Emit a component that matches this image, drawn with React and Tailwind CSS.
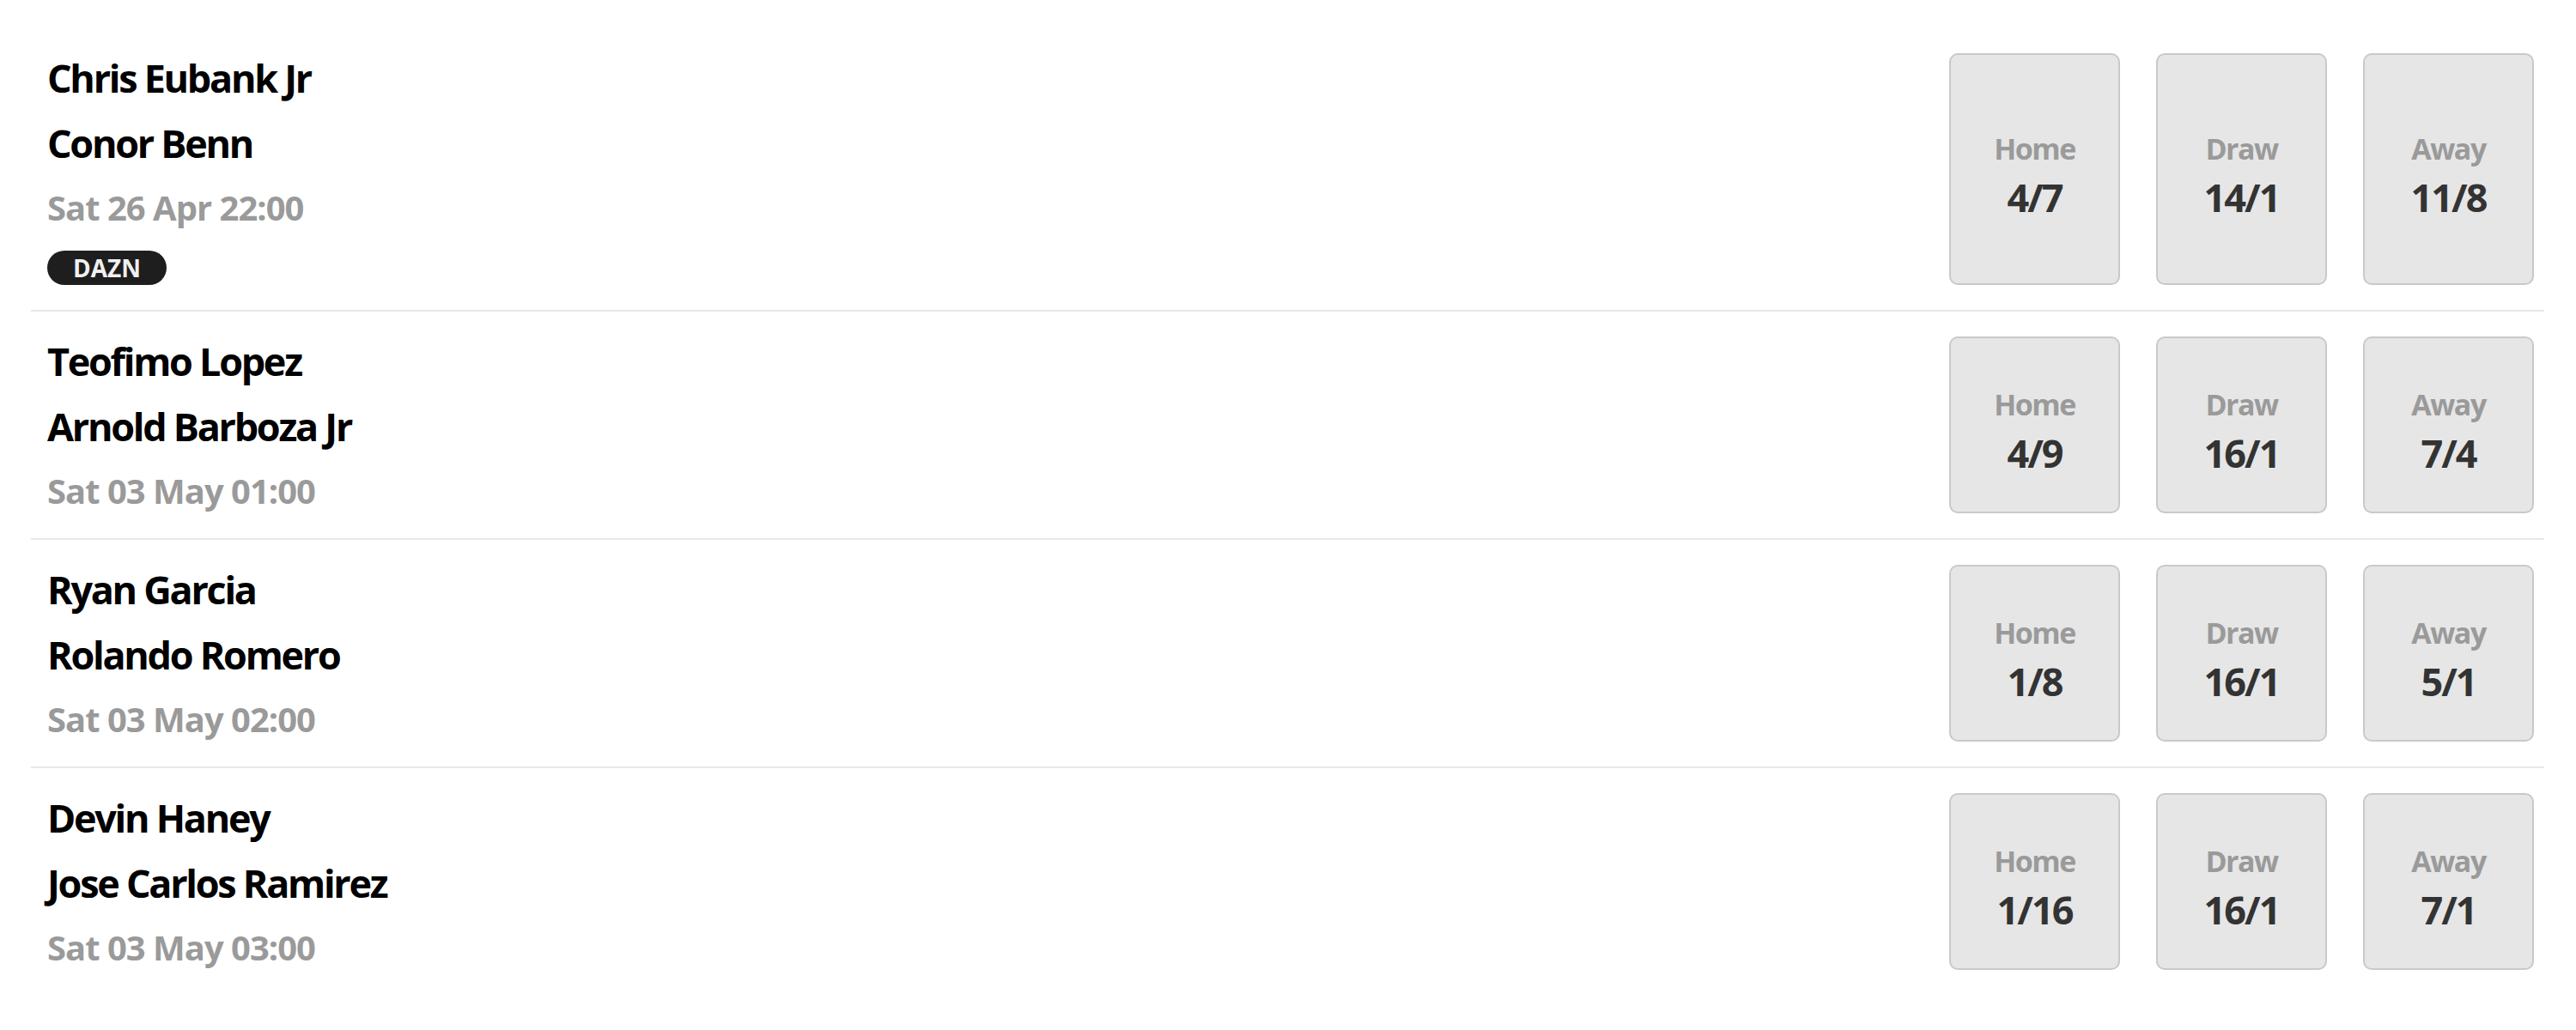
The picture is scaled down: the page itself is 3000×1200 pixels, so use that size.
import React from 'react';

const fights = [
  { home: 'Chris Eubank Jr', away: 'Conor Benn', date: 'Sat 26 Apr 22:00', tv: 'DAZN', odds: ['4/7', '14/1', '11/8'] },
  { home: 'Teofimo Lopez', away: 'Arnold Barboza Jr', date: 'Sat 03 May 01:00', odds: ['4/9', '16/1', '7/4'] },
  { home: 'Ryan Garcia', away: 'Rolando Romero', date: 'Sat 03 May 02:00', odds: ['1/8', '16/1', '5/1'] },
  { home: 'Devin Haney', away: 'Jose Carlos Ramirez', date: 'Sat 03 May 03:00', odds: ['1/16', '16/1', '7/1'] },
];

const labels = ['Home', 'Draw', 'Away'];

const OddsButton = ({ label, price }) => (
  <button className="w-[199px] flex flex-col items-center justify-center pt-[16px] bg-[#e6e6e6] border-2 border-[#c9c9c9] rounded-[10px]">
    <span className="text-[34px] leading-[40px] font-bold text-[#9a9a9a] tracking-[-1.5px]">{label}</span>
    <span className="mt-[9px] text-[45px] leading-[56px] font-bold text-[#333333] tracking-[-2px]">{price}</span>
  </button>
);

const App = () => {
  return (
    <div className="min-h-screen bg-white pt-[33px] pl-[36px] pr-[37px] font-['Open_Sans','Noto_Sans',sans-serif]">
      {fights.map((f, i) => (
        <div
          key={f.home}
          className={`flex justify-between pl-[19px] pr-[12px] py-[29px] ${i < fights.length - 1 ? 'border-b-2 border-[#e8e8e8]' : ''}`}
        >
          <div className="flex flex-col">
            <span className="text-[45px] leading-[58px] font-bold text-black tracking-[-2.3px]">{f.home}</span>
            <span className="mt-[18px] text-[45px] leading-[58px] font-bold text-black tracking-[-2.3px]">{f.away}</span>
            <span className="mt-[20px] text-[40px] leading-[52px] font-bold text-[#9a9a9a] tracking-[-1px]">{f.date}</span>
            {f.tv && (
              <span className="mt-[24px] self-start h-[40px] px-[30px] flex items-center rounded-full bg-[#1e1e1e] text-[28px] font-bold text-[#f0f0f0]">
                {f.tv}
              </span>
            )}
          </div>
          <div className="flex gap-[42px]">
            {f.odds.map((o, j) => (
              <OddsButton key={j} label={labels[j]} price={o} />
            ))}
          </div>
        </div>
      ))}
    </div>
  );
};

export default App;
